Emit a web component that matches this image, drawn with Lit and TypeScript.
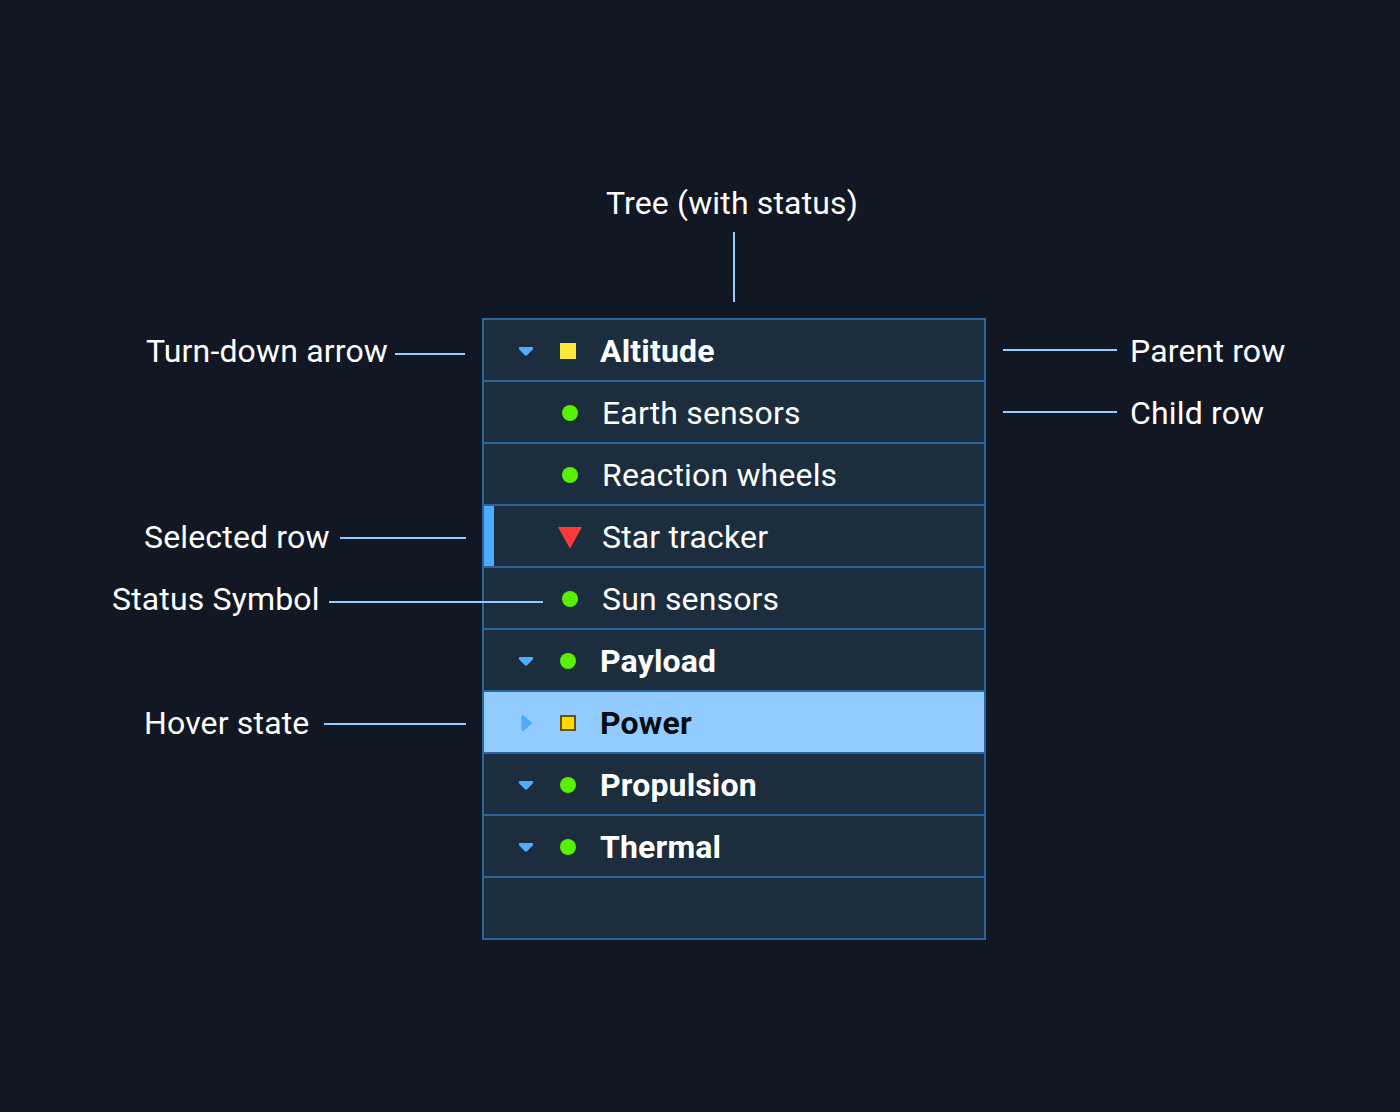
import { LitElement, html, css, svg, nothing } from "lit";
import { customElement, property } from "lit/decorators.js";

type Status = "normal" | "caution" | "critical";

interface TreeNode {
  label: string;
  status?: Status;
  parent?: boolean;
  collapsed?: boolean;
  selected?: boolean;
  hovered?: boolean;
}

interface Callout {
  row: number;
  label: string;
  indent: number;
  lineStart: number;
  lineEnd: number;
  lineTop: number;
}

const NODES: TreeNode[] = [
  { label: "Altitude", status: "caution", parent: true },
  { label: "Earth sensors", status: "normal" },
  { label: "Reaction wheels", status: "normal" },
  { label: "Star tracker", status: "critical", selected: true },
  { label: "Sun sensors", status: "normal" },
  { label: "Payload", status: "normal", parent: true },
  { label: "Power", status: "caution", parent: true, collapsed: true, hovered: true },
  { label: "Propulsion", status: "normal", parent: true },
  { label: "Thermal", status: "normal", parent: true },
  { label: "" },
];

const LEFT: Callout[] = [
  { row: 1, label: "Turn-down arrow", indent: 146, lineStart: 395, lineEnd: 465, lineTop: 33 },
  { row: 4, label: "Selected row", indent: 144, lineStart: 340, lineEnd: 466, lineTop: 31 },
  { row: 5, label: "Status Symbol", indent: 112, lineStart: 329, lineEnd: 543, lineTop: 33 },
  { row: 7, label: "Hover state", indent: 144, lineStart: 324, lineEnd: 466, lineTop: 31 },
];

const RIGHT = ["Parent row", "Child row"];

@customElement("status-symbol")
export class StatusSymbol extends LitElement {
  @property() status: Status = "normal";
  @property({ type: Boolean }) outlined = false;

  static styles = css`
    :host { display: block; width: 24px; height: 24px; }
    .symbol { display: block; }
    .normal { fill: #56f000; }
    .caution { fill: #fce83a; }
    .critical { fill: #ff3838; }
    .outlined { fill: #fad800; stroke: #645600; stroke-width: 2; }
  `;

  render() {
    const shape =
      this.status === "normal"
        ? svg`<circle class="normal" cx="12" cy="12" r="8"/>`
        : this.status === "critical"
          ? svg`<path class="critical" d="M0 2h24L12 23.8z"/>`
          : this.outlined
            ? svg`<rect class="outlined" x="5" y="5" width="14" height="14"/>`
            : svg`<rect class="caution" x="4" y="4" width="16" height="16"/>`;
    return html`<svg class="symbol" width="24" height="24" viewBox="0 0 24 24">${shape}</svg>`;
  }
}

@customElement("tree-row")
export class TreeRow extends LitElement {
  @property({ attribute: false }) node!: TreeNode;

  static styles = css`
    :host { display: block; }
    .row {
      display: flex;
      align-items: center;
      box-sizing: border-box;
      height: 60px;
      padding-top: 2px;
      padding-left: 32px;
      background: #1c2d3e;
      color: #fff;
    }
    .selected { box-shadow: inset 10px 0 #4dacff; }
    .hovered { background: #92cbff; color: #080c11; }
    .arrow { width: 20px; height: 20px; fill: #4dacff; margin-right: 20px; flex: none; }
    .child { padding-left: 74px; }
    .label {
      margin-left: 20px;
      line-height: 58px;
      white-space: nowrap;
    }
    .parent .label { font-weight: 700; }
  `;

  render() {
    const n = this.node;
    if (!n.label) return html`<div class="row"></div>`;
    const cls = [
      "row",
      n.parent ? "parent" : "child",
      n.selected ? "selected" : "",
      n.hovered ? "hovered" : "",
    ].join(" ");
    const arrow = n.collapsed
      ? svg`<path d="M5.300 3.500v13c0 1.500 1.700 2 2.700 1.100l7.200-6.500c.8-.7.8-1.500 0-2.200L8 2.400C7 1.500 5.300 2 5.300 3.500z"/>`
      : svg`<path d="M4 6h12c1.300 0 1.600 1.700.7 2.600l-5.300 5.500c-.8.900-2 .9-2.800 0L3.300 8.600C2.400 7.700 2.700 6 4 6z"/>`;
    return html`<div class=${cls}>
      ${n.parent ? html`<svg class="arrow" viewBox="0 0 20 20">${arrow}</svg>` : nothing}
      <status-symbol .status=${n.status!} ?outlined=${!!n.hovered}></status-symbol>
      <span class="label">${n.label}</span>
    </div>`;
  }
}

@customElement("app-root")
export class AppRoot extends LitElement {
  static styles = css`
    :host {
      display: block;
      box-sizing: border-box;
      width: 1400px;
      height: 1112px;
      padding-top: 172px;
      overflow: hidden;
      background: #111823;
      color: #fff;
      font-family: Roboto, "Liberation Sans", sans-serif;
      font-size: 32px;
      letter-spacing: 0.16px;
    }
    .title {
      display: flex;
      flex-direction: column;
      align-items: center;
      width: 504px;
      height: 146px;
      margin-left: 482px;
    }
    .title-text {
      height: 60px;
      line-height: 62px;
      margin-right: 4px;
      white-space: nowrap;
    }
    .stem { width: 2px; height: 70px; background: #92cbff; }
    .diagram { display: grid; grid-template-columns: 482px 504px 1fr; }
    .tree {
      display: flex;
      flex-direction: column;
      gap: 2px;
      padding: 2px;
      background: #2b659b;
    }
    .notes {
      display: grid;
      grid-template-rows: repeat(10, 62px);
      padding-top: 2px;
    }
    .left { z-index: 1; }
    .note {
      display: grid;
      align-items: start;
      white-space: nowrap;
    }
    .note-text { line-height: 60px; padding-top: 1px; }
    .line { height: 2px; background: #92cbff; }
    .right .note { grid-template-columns: 114px auto; gap: 13px; padding-left: 17px; }
    .right .line { margin-top: 29px; }
  `;

  render() {
    return html`
      <div class="title">
        <div class="title-text">Tree (with status)</div>
        <div class="stem"></div>
      </div>
      <div class="diagram">
        <div class="notes left">
          ${LEFT.map(
            (c) => html`<div
              class="note"
              style="grid-row:${c.row};padding-left:${c.indent}px;grid-template-columns:${c.lineStart - c.indent}px ${c.lineEnd - c.lineStart}px"
            >
              <span class="note-text">${c.label}</span>
              <div class="line" style="margin-top:${c.lineTop}px"></div>
            </div>`
          )}
        </div>
        <div class="tree">${NODES.map((n) => html`<tree-row .node=${n}></tree-row>`)}</div>
        <div class="notes right">
          ${RIGHT.map(
            (label) => html`<div class="note">
              <div class="line"></div>
              <span class="note-text">${label}</span>
            </div>`
          )}
        </div>
      </div>
    `;
  }
}
